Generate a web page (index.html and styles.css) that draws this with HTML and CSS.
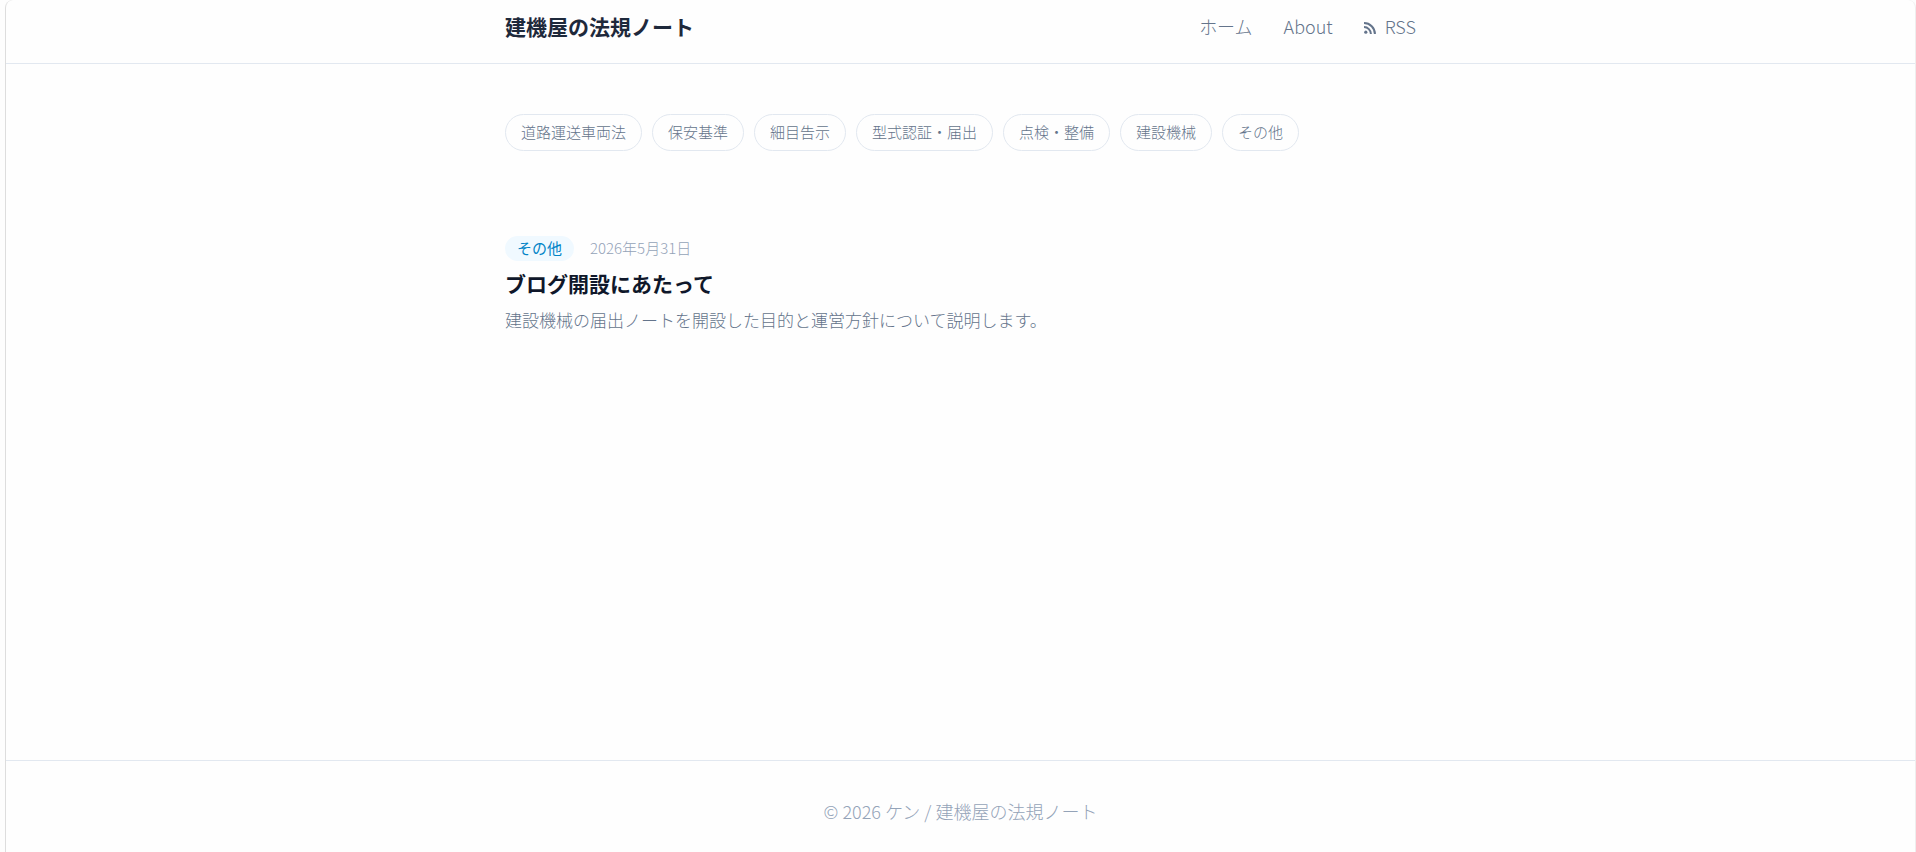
FILE: index.html
```html
<!doctype html>
<html lang="ja">
<head>
    <meta charset="UTF-8">
    <meta name="viewport" content="width=device-width, initial-scale=1">
    <title>建機屋の法規ノート</title>
    <link rel="stylesheet" href="styles.css">
</head>
<body>
    <div class="page">
        <header class="site-header">
            <div class="container header-inner">
                <a class="site-title" href="#">建機屋の法規ノート</a>
                <nav class="site-nav">
                    <a href="#">ホーム</a>
                    <a href="#">About</a>
                    <a class="rss" href="#">
                        <svg width="12" height="12" viewBox="0 0 12 12" fill="none" stroke="currentColor" stroke-width="2" aria-hidden="true">
                            <circle cx="1.8" cy="10.2" r="1.6" fill="currentColor" stroke="none"/>
                            <path d="M0 5.1a6.9 6.9 0 0 1 6.9 6.9"/>
                            <path d="M0 1.1a10.9 10.9 0 0 1 10.9 10.9"/>
                        </svg>
                        RSS
                    </a>
                </nav>
            </div>
        </header>

        <main class="container main">
            <!-- カテゴリ -->
            <nav class="categories">
                <a href="#">道路運送車両法</a>
                <a href="#">保安基準</a>
                <a href="#">細目告示</a>
                <a href="#">型式認証・届出</a>
                <a href="#">点検・整備</a>
                <a href="#">建設機械</a>
                <a href="#">その他</a>
            </nav>

            <!-- 記事一覧 -->
            <article class="post">
                <div class="post-meta">
                    <a class="badge" href="#">その他</a>
                    <time datetime="2026-05-31">2026年5月31日</time>
                </div>
                <h2 class="post-title"><a href="#">ブログ開設にあたって</a></h2>
                <p class="post-desc">建設機械の届出ノートを開設した目的と運営方針について説明します。</p>
            </article>
        </main>

        <footer class="site-footer">
            <p>© 2026 ケン / 建機屋の法規ノート</p>
        </footer>
    </div>
</body>
</html>
```
FILE: styles.css
```css
*{
    margin: 0;
    padding: 0;
    box-sizing: border-box;
}
body{
    background: #fdfdfd;
    color: #64748b;
    font-family: "Noto Sans CJK JP", sans-serif;
    font-size: 18px;
    font-weight: 300;
    line-height: 28px;
}
a{
    color: inherit;
    text-decoration: none;
}
.page{
    display: flex;
    flex-direction: column;
    min-height: 100vh;
    margin-left: 5px;
    background: #fefefe;
    border-left: 1px solid #dddddd;
    border-right: 1px solid #eeeeee;
    border-radius: 8px 8px 0 0;
}
.container{
    width: 100%;
    max-width: 911px;
    margin: 0 auto;
}

/* ヘッダー */
.site-header{
    border-bottom: 1px solid #e2e8f0;
}
.header-inner{
    display: flex;
    justify-content: space-between;
    align-items: center;
    padding: 12px 0 23px;
}
.site-title{
    color: #1e293b;
    font-size: 21px;
    font-weight: 700;
}
.site-nav{
    display: flex;
    gap: 31px;
}
.rss{
    display: flex;
    align-items: baseline;
    gap: 9px;
}

/* カテゴリ */
.main{
    flex: 1;
    padding: 50px 0;
}
.categories{
    display: flex;
    flex-wrap: wrap;
    gap: 10px;
}
.categories a{
    padding: 5px 15px 6px;
    border: 1px solid #e2e8f0;
    border-radius: 20px;
    font-size: 15px;
    line-height: 24px;
}

/* 記事 */
.post{
    margin-top: 85px;
}
.post-meta{
    display: flex;
    align-items: baseline;
    gap: 16px;
    color: #94a3b8;
    font-size: 15px;
    line-height: 24px;
}
.badge{
    padding: 0 12px 1px;
    border-radius: 13px;
    background: #f0f9ff;
    color: #0284c7;
    font-weight: 400;
}
.post-title{
    margin-top: 7px;
    color: #0f172a;
    font-size: 21px;
    font-weight: 700;
    line-height: 30px;
}
.post-desc{
    margin-top: 8px;
    font-size: 17px;
}

/* フッター */
.site-footer{
    padding: 36px 0 27px;
    border-top: 1px solid #e2e8f0;
    color: #94a3b8;
    text-align: center;
}
```
